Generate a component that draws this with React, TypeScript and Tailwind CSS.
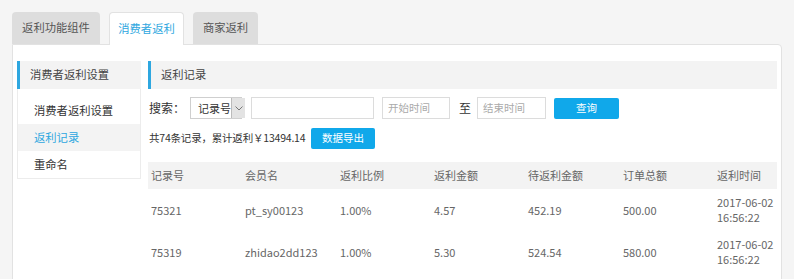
import React from "react";

const tabs = [
  { label: "返利功能组件", active: false, w: "w-[88px]" },
  { label: "消费者返利", active: true, w: "w-[75px]" },
  { label: "商家返利", active: false, w: "w-[65px]" },
];

const sideItems = ["消费者返利设置", "返利记录", "重命名"];

const columns = ["记录号", "会员名", "返利比例", "返利金额", "待返利金额", "订单总额", "返利时间"];

const rows = [
  ["75321", "pt_sy00123", "1.00%", "4.57", "452.19", "500.00", "2017-06-02", "16:56:22"],
  ["75319", "zhidao2dd123", "1.00%", "5.30", "524.54", "580.00", "2017-06-02", "16:56:22"],
];

const gridCols = "grid grid-cols-[94px_95px_94px_94px_95px_94px_1fr]";

export default function App() {
  return (
    <div
      className="h-[279px] overflow-hidden whitespace-nowrap bg-[#f5f5f5] pl-3 pt-3 pr-3 text-[11.3px] leading-none text-[#333]"
      style={{ fontFamily: '"Noto Sans CJK SC", "Noto Sans", sans-serif' }}
    >
      {/* tabs */}
      <div className="flex h-[32px] gap-[9px]">
        {tabs.map((t) => (
          <div
            key={t.label}
            className={`${t.w} flex items-center justify-center rounded-t-[4px] ${
              t.active
                ? "relative z-10 h-[33px] border border-b-0 border-[#e2e2e2] bg-white text-[#2ea7e0]"
                : "h-[32px] bg-[#dddddd] text-[#555]"
            }`}
          >
            {t.label}
          </div>
        ))}
      </div>

      {/* panel */}
      <div className="flex h-[300px] w-[770px] gap-[7px] rounded-tr-[4px] border border-[#e2e2e2] bg-white px-[4px] pt-4">
        {/* sidebar */}
        <div className="w-[124px] shrink-0">
          <div className="flex h-[28px] items-center border-l-[3px] border-[#2ea7e0] bg-[#f3f3f3] pl-[10px] text-[#444]">
            消费者返利设置
          </div>
          <div className="border border-t-0 border-[#ececec] pt-[8px]">
            {sideItems.map((s, i) => (
              <div
                key={s}
                className={`flex h-[27px] items-center pl-[16px] ${
                  i === 1 ? "bg-[#f3f3f3] text-[#2ea7e0]" : "text-[#333]"
                }`}
              >
                {s}
              </div>
            ))}
          </div>
        </div>

        {/* content */}
        <div className="flex-1">
          <div className="flex h-[28px] items-center border-l-[3px] border-[#2ea7e0] bg-[#f3f3f3] pl-[10px] text-[#444]">
            返利记录
          </div>

          {/* search row */}
          <div className="mt-[8px] flex h-[22px] items-center">
            <span className="w-[42px] pl-[1px] text-[12px] text-[#333]">搜索：</span>
            <div className="flex h-[22px] w-[52px] items-center border border-[#cfcfcf] bg-white">
              <span className="flex-1 pl-[7px] text-[11px] text-[#333]">记录号</span>
              <span className="flex h-full w-[14px] shrink-0 items-center justify-center border-l border-[#bbb] bg-[#e3e3e3]">
                <svg width="8" height="5" viewBox="0 0 8 5">
                  <path d="M0.5 0.5 L4 4 L7.5 0.5" fill="none" stroke="#777" strokeWidth="1" />
                </svg>
              </span>
            </div>
            <div className="ml-[9px] h-[22px] w-[123px] border border-[#dcdcdc] bg-white" />
            <div className="ml-[8px] flex h-[22px] w-[68px] items-center border border-[#dcdcdc] bg-white pl-[5px] text-[10.5px] text-[#aaa]">
              开始时间
            </div>
            <span className="ml-[9px] text-[12px] text-[#333]">至</span>
            <div className="ml-[6px] flex h-[22px] w-[69px] items-center border border-[#dcdcdc] bg-white pl-[5px] text-[10.5px] text-[#aaa]">
              结束时间
            </div>
            <button className="ml-[8px] flex h-[21px] w-[65px] items-center justify-center rounded-[2px] bg-[#10a8ea] text-[10.5px] text-white">
              查询
            </button>
          </div>

          {/* summary row */}
          <div className="mt-[9px] flex h-[21px] items-center">
            <span className="w-[163px] pl-[1px] text-[10.5px] tracking-[-0.2px] text-[#333]">
              共74条记录，累计返利￥13494.14
            </span>
            <button className="flex h-[21px] w-[64px] items-center justify-center rounded-[2px] bg-[#10a8ea] text-[10.5px] text-white">
              数据导出
            </button>
          </div>

          {/* table */}
          <div className="mt-[13px] w-[629px] text-[11px] text-[#666]">
            <div className={`${gridCols} h-[27px] items-center bg-[#f3f3f3]`}>
              {columns.map((c) => (
                <div key={c} className="pl-[3px]">
                  {c}
                </div>
              ))}
            </div>
            {rows.map((r) => (
              <div key={r[0]} className={`${gridCols} h-[42px] items-center`}>
                {r.slice(0, 6).map((v, i) => (
                  <div key={i} className="pl-[3px]">
                    {v}
                  </div>
                ))}
                <div className="flex flex-col gap-[4px] pl-[3px]">
                  <span>{r[6]}</span>
                  <span>{r[7]}</span>
                </div>
              </div>
            ))}
          </div>
        </div>
      </div>
    </div>
  );
}
